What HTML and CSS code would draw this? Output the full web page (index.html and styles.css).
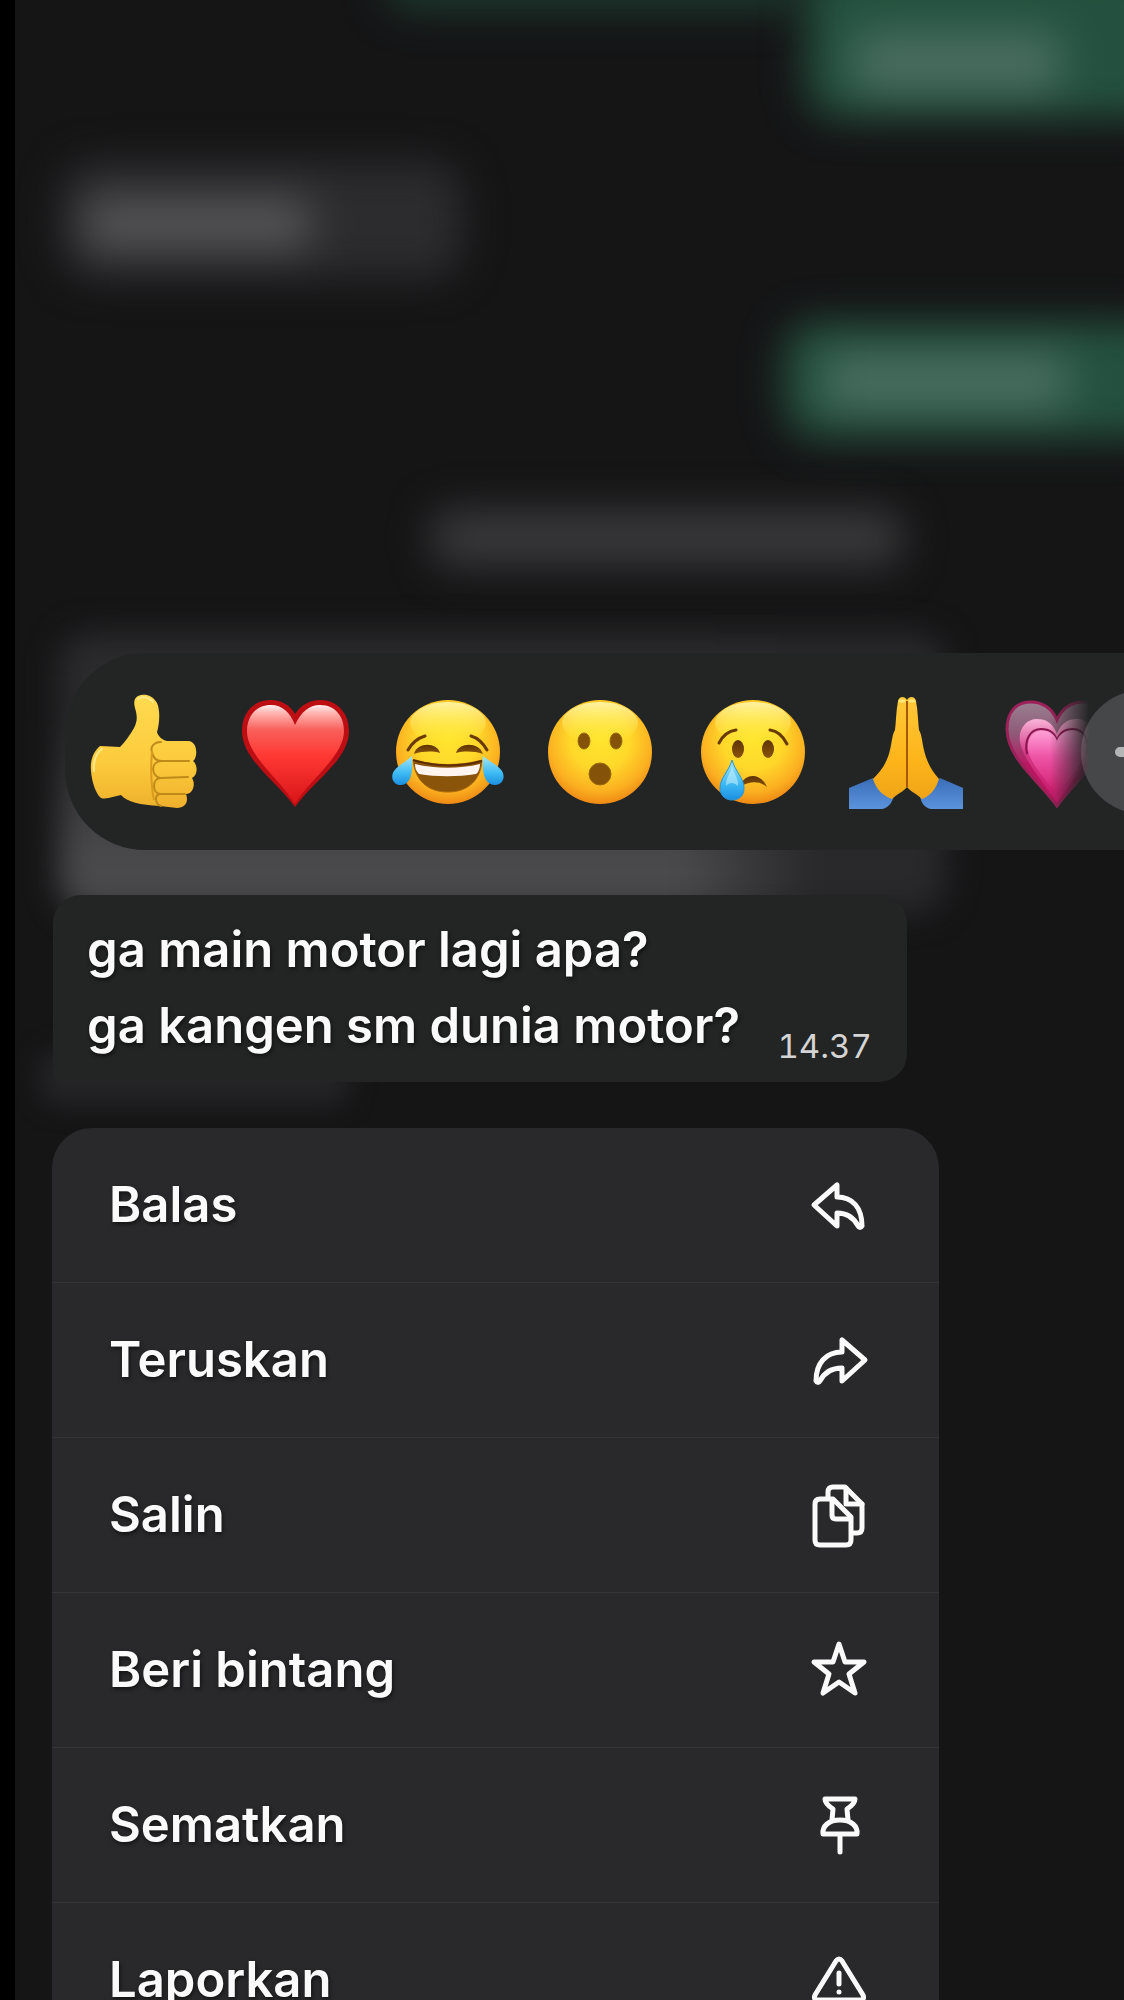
FILE: index.html
```html
<!DOCTYPE html>
<html lang="id">
<head>
  <meta charset="UTF-8">
  <meta name="viewport" content="width=device-width, initial-scale=1">
  <title>Chat</title>
  <link rel="stylesheet" href="styles.css">
</head>
<body>

  <main class="chat">

    <!-- older messages, out of focus behind the menu -->
    <div class="history" aria-hidden="true">
      <div class="row row-top">
        <div class="ghost ghost-strip"></div>
        <div class="ghost ghost-out"><span></span></div>
      </div>
      <div class="row">
        <div class="ghost ghost-in"><span></span></div>
      </div>
      <div class="row row-end">
        <div class="ghost ghost-out ghost-wide"><span></span></div>
      </div>
      <div class="row row-date">
        <div class="ghost ghost-date"></div>
      </div>
    </div>

    <section class="selected">
      <div class="selected-shade" aria-hidden="true"></div>
      <div class="selected-tail" aria-hidden="true"></div>

      <div class="reactions">
        <button type="button" class="reaction" aria-label="Suka">
          <svg viewBox="0 0 120 120">
            <defs>
              <linearGradient id="skin" x1="0" y1="0" x2="0" y2="1">
                <stop offset="0" stop-color="#ffda50"/>
                <stop offset="0.6" stop-color="#fccb3c"/>
                <stop offset="1" stop-color="#eeb02c"/>
              </linearGradient>
            </defs>
            <path fill="url(#skin)" d="M16 54C9 60 6 69 7 79C8 91 12 102 17 106C23 108 30 104 37 103C43 110 56 113 76 114L93 116C101 116 105 110 102 102C109 102 112 92 108 86C114 83 114 73 109 69C114 66 114 49 104 49L83 49C78 48 74 44 73 40C76 30 76 17 73 11C69 4 63 2 57 3C51 4 49 9 51 16C53 23 54 28 50 36C46 43 41 50 36 55Z"/>
            <g fill="none" stroke="#c08a1a" stroke-width="2" stroke-linecap="round">
              <path d="M77 50C70 50 66 55 68 60C69 66 72 69 78 69L105 69"/>
              <path d="M78 69C66 69 67 84 76 86L104 85"/>
              <path d="M76 86C68 87 68 101 76 102L101 102"/>
              <path d="M76 102C70 103 71 112 77 114"/>
            </g>
            <path fill="none" stroke="#d99b1e" stroke-width="2" d="M68 59C67 72 67 94 70 108"/>
            <path fill="none" stroke="#ffe98a" stroke-width="2" stroke-linecap="round" d="M54 7C58 4 65 5 69 10M18 57C12 61 9 70 10 79"/>
          </svg>
        </button>

        <button type="button" class="reaction" aria-label="Hati">
          <svg viewBox="0 0 120 120">
            <defs>
              <linearGradient id="heartFill" x1="0" y1="0" x2="0" y2="1">
                <stop offset="0" stop-color="#fff0ee"/>
                <stop offset="0.08" stop-color="#ffb5b1"/>
                <stop offset="0.25" stop-color="#f9605c"/>
                <stop offset="0.5" stop-color="#ff3a35"/>
                <stop offset="1" stop-color="#d81418"/>
              </linearGradient>
            </defs>
            <path fill="#bd0e14" d="M59 22C54 13 45 8 35 8C17 8 6 21 6 39C6 68 41 89 59 115C77 89 113 68 113 39C113 21 101 8 84 8C74 8 65 13 59 22Z"/>
            <path fill="url(#heartFill)" d="M59 33C54 20 46 13 35 13C20 13 11 24 11 39C11 64 44 87 59 112C74 87 108 64 108 39C108 24 99 13 84 13C73 13 65 20 59 33Z"/>
          </svg>
        </button>

        <button type="button" class="reaction" aria-label="Tertawa">
          <svg viewBox="0 0 120 120">
            <defs>
              <radialGradient id="face" cx="0.5" cy="0.38" r="0.64">
                <stop offset="0" stop-color="#ffe52e"/>
                <stop offset="0.45" stop-color="#ffd82a"/>
                <stop offset="0.78" stop-color="#fbb021"/>
                <stop offset="1" stop-color="#ec8412"/>
              </radialGradient>
              <linearGradient id="shine" x1="0" y1="0" x2="0" y2="1">
                <stop offset="0" stop-color="#fff9b8" stop-opacity="0.85"/>
                <stop offset="1" stop-color="#fff23a" stop-opacity="0"/>
              </linearGradient>
              <linearGradient id="eye" x1="0" y1="0" x2="0" y2="1">
                <stop offset="0" stop-color="#5e3305"/>
                <stop offset="1" stop-color="#8a5509"/>
              </linearGradient>
              <linearGradient id="tear" x1="0" y1="0" x2="0" y2="1">
                <stop offset="0" stop-color="#a4e6f8"/>
                <stop offset="0.6" stop-color="#3cb9f3"/>
                <stop offset="1" stop-color="#1c8fe0"/>
              </linearGradient>
            </defs>
            <circle cx="60" cy="60" r="52" fill="url(#face)"/>
            <ellipse cx="60" cy="31" rx="38" ry="21" fill="url(#shine)"/>
            <g fill="none" stroke="#6a3a05" stroke-width="3" stroke-linecap="round">
              <path d="M20 58C24 51 30 46 37 44"/>
              <path d="M83 44C90 46 95 51 99 58"/>
            </g>
            <path fill="url(#eye)" d="M26 62C29 50 49 50 52 61C45 59 35 59 26 62ZM68 61C71 50 91 50 95 62C86 59 76 59 68 61Z"/>
            <path fill="#8a540b" stroke="#a8680b" d="M25 68C47 74 73 74 94 68C93 88 80 100 60 100C39 100 27 88 25 68Z"/>
            <path fill="#fff4f0" d="M27 72C48 77 71 77 92 72C92 77 90 81 88 82C70 85 48 85 31 82C28 79 27 76 27 72Z"/>
            <path fill="none" stroke="#5e2d05" stroke-width="2" d="M25 68C47 75 73 75 94 69"/>
            <path fill="url(#tear)" d="M24 64C25 77 24 93 13 93C5 93 2 85 6 79C10 73 18 70 24 64Z"/>
            <path fill="url(#tear)" d="M95 64C102 70 110 73 114 79C118 86 114 93 107 93C95 93 94 76 95 64Z"/>
          </svg>
        </button>

        <button type="button" class="reaction" aria-label="Terkejut">
          <svg viewBox="0 0 120 120">
            <circle cx="60" cy="60" r="52" fill="url(#face)"/>
            <ellipse cx="60" cy="31" rx="38" ry="21" fill="url(#shine)"/>
            <g fill="#845208" stroke="#9a6a0a" stroke-width="1">
              <ellipse cx="44" cy="49" rx="6" ry="8"/>
              <ellipse cx="76" cy="49" rx="6" ry="8"/>
              <circle cx="60" cy="82" r="11"/>
            </g>
          </svg>
        </button>

        <button type="button" class="reaction" aria-label="Sedih">
          <svg viewBox="0 0 120 120">
            <circle cx="61" cy="60" r="52" fill="url(#face)"/>
            <ellipse cx="61" cy="31" rx="38" ry="21" fill="url(#shine)"/>
            <g fill="none" stroke="#6a3a05" stroke-width="3" stroke-linecap="round">
              <path d="M27 51C31 43 37 39 44 38"/>
              <path d="M78 38C86 39 91 44 95 52"/>
            </g>
            <g fill="url(#eye)">
              <ellipse cx="46" cy="57" rx="6" ry="9"/>
              <ellipse cx="76" cy="57" rx="6" ry="9"/>
              <path d="M49 92C54 81 69 81 75 95C68 89 58 89 50 94Z"/>
            </g>
            <path fill="url(#tear)" stroke="#2a94d6" d="M40 68C43 79 52 86 52 96C52 104 47 108 40 108C33 108 28 103 28 96C28 86 37 79 40 68Z"/>
            <path fill="#d5f6fd" opacity="0.5" d="M40 74C42 82 47 87 46 94C42 90 37 90 34 94C33 87 39 81 40 74Z"/>
          </svg>
        </button>

        <button type="button" class="reaction" aria-label="Terima kasih">
          <svg viewBox="0 0 120 120">
            <defs>
              <linearGradient id="palm" x1="0" y1="0" x2="0" y2="1">
                <stop offset="0" stop-color="#ffc93a"/>
                <stop offset="0.6" stop-color="#fdb51b"/>
                <stop offset="1" stop-color="#f0a416"/>
              </linearGradient>
              <linearGradient id="sleeve" x1="0" y1="0" x2="0" y2="1">
                <stop offset="0" stop-color="#3a6db8"/>
                <stop offset="1" stop-color="#5b94dc"/>
              </linearGradient>
            </defs>
            <path fill="url(#sleeve)" d="M29 86L5 96L5 117L38 117C44 116 48 111 50 104ZM96 86L119 96L119 117L87 117C81 116 77 111 76 104Z"/>
            <path fill="url(#palm)" d="M63 8C61 4 55 4 54 9C52 20 52 30 51 38C48 43 48 50 46 58C43 71 37 79 29 87C32 97 39 104 48 107C53 102 59 100 63 95C67 100 73 102 78 107C86 104 92 97 95 87C88 79 83 71 80 58C78 50 78 43 75 38C74 30 74 20 72 9C71 4 65 4 63 8Z"/>
            <path fill="none" stroke="#a45a0a" stroke-width="2" d="M63 9L63 95"/>
            <path fill="none" stroke="#ffe77c" stroke-width="3" stroke-linecap="round" d="M56 9L60 9M66 9L70 9"/>
          </svg>
        </button>

        <button type="button" class="reaction reaction-fade" aria-label="Hati tumbuh">
          <svg viewBox="0 0 120 120">
            <defs>
              <linearGradient id="pink" x1="0" y1="0" x2="0" y2="1">
                <stop offset="0" stop-color="#ff9fd6"/>
                <stop offset="0.4" stop-color="#ee55a6"/>
                <stop offset="1" stop-color="#cf1a6c"/>
              </linearGradient>
              <linearGradient id="pinkMid" x1="0" y1="0" x2="0" y2="1">
                <stop offset="0" stop-color="#f9b4d8"/>
                <stop offset="0.4" stop-color="#d43a86"/>
                <stop offset="1" stop-color="#c8186b"/>
              </linearGradient>
              <linearGradient id="pinkOut" x1="0" y1="0" x2="0" y2="1">
                <stop offset="0" stop-color="#9a8090"/>
                <stop offset="0.3" stop-color="#8f5a78"/>
                <stop offset="0.6" stop-color="#b81862"/>
                <stop offset="1" stop-color="#c2145f"/>
              </linearGradient>
            </defs>
            <path fill="url(#pinkOut)" stroke="#9c2159" stroke-width="3" d="M61 28C56 16 46 10 35 10C20 10 11 20 11 37C11 66 43 89 61 114C79 89 111 66 111 37C111 20 102 10 87 10C76 10 66 16 61 28Z"/>
            <path fill="url(#pinkMid)" d="M61 42C57 31 50 27 41 27C30 27 22 37 24 50C28 70 48 90 61 110C74 90 94 70 98 50C100 37 92 27 81 27C72 27 65 31 61 42Z"/>
            <path fill="none" stroke="#8c1450" stroke-width="2" d="M31 62C28 48 34 37 45 37C53 37 59 41 61 49C63 41 69 37 77 37C88 37 94 48 91 62"/>
            <path fill="url(#pink)" d="M61 49C59 42 53 39 46 39C36 39 31 47 32 58C35 74 51 88 61 103C71 88 87 74 90 58C91 47 86 39 76 39C69 39 63 42 61 49Z"/>
          </svg>
        </button>

        <button type="button" class="more" aria-label="Reaksi lainnya">
          <svg viewBox="0 0 124 124">
            <path d="M39 62H85M62 39V85"/>
          </svg>
        </button>
      </div>

      <article class="message">
        <p>ga main motor lagi apa?<br>ga kangen sm dunia motor?</p>
        <time datetime="14:37">14.37</time>
      </article>
    </section>

    <menu class="actions">
      <li>
        <button type="button">Balas
          <svg viewBox="0 0 60 60"><path d="M6 31L29 11V23C45 23 54 34 54 52C53 54 51 54 50 52C46 44 40 39 29 39V52Z"/></svg>
        </button>
      </li>
      <li>
        <button type="button">Teruskan
          <svg viewBox="0 0 60 60"><path d="M57 31L34 11V23C18 23 8 34 8 52C9 54 11 54 12 52C16 44 23 39 34 39V52Z"/></svg>
        </button>
      </li>
      <li>
        <button type="button">Salin
          <svg viewBox="0 0 60 60">
            <path d="M20 14V8Q20 3 25 3H37L54 20V44Q54 49 49 49H44"/>
            <path d="M38 4V20H54"/>
            <path d="M12 15H25L43 33V56Q43 61 38 61H12Q7 61 7 56V20Q7 15 12 15Z"/>
            <path d="M24 16V31Q24 35 28 35H42"/>
          </svg>
        </button>
      </li>
      <li>
        <button type="button">Beri bintang
          <svg viewBox="0 0 60 60"><path d="M31 5L37 23L56 23L41 35L47 54L31 43L15 54L21 35L6 23L25 23Z"/></svg>
        </button>
      </li>
      <li>
        <button type="button">Sematkan
          <svg viewBox="0 0 60 60">
            <path d="M17 5H47C47 9 42 13 39 15L40 26M17 5C17 9 22 13 25 15L24 26"/>
            <path d="M15 40C14 32 21 26 32 26C43 26 50 32 49 40Z"/>
            <path d="M32 41V58"/>
          </svg>
        </button>
      </li>
      <li>
        <button type="button">Laporkan
          <svg viewBox="0 0 60 60">
            <path d="M28 12Q31 8 34 12L55 46Q57 51 52 51H10Q5 51 7 46Z"/>
            <path d="M31 24V35M31 43V43"/>
          </svg>
        </button>
      </li>
    </menu>

  </main>

</body>
</html>
```

FILE: styles.css
```css
* {
  box-sizing: border-box;
}
body {
  margin: 0;
  background: #000;
  color: #fafafa;
  font-family: Inter, "Liberation Sans", sans-serif;
}
button {
  margin: 0;
  padding: 0;
  border: none;
  background: none;
  color: inherit;
  font: inherit;
  cursor: pointer;
}
svg {
  display: block;
}
.chat {
  height: 100vh;
  margin-left: 15px;
  overflow: hidden;
  background: #151516;
}

/* blurred history */
.history {
  display: flex;
  flex-direction: column;
  gap: 44px;
  height: 653px;
}
.row {
  display: flex;
}
.row-top {
  justify-content: flex-end;
  align-items: flex-start;
  margin-top: -40px;
}
.row-end {
  justify-content: flex-end;
}
.row-date {
  justify-content: flex-end;
  margin-top: 28px;
  padding-right: 20%;
}
.ghost {
  border-radius: 32px;
  filter: blur(20px);
}
.ghost-strip {
  width: 38%;
  height: 50px;
  background: #1d3a2f;
}
.ghost-out {
  width: 33%;
  height: 158px;
  margin-right: -48px;
  padding: 72px 112px 24px 48px;
  background: #24513f;
}
.ghost-wide {
  width: 35%;
  height: 116px;
  padding: 32px 104px 28px 40px;
}
.ghost-out span {
  display: block;
  height: 100%;
  background: #4a6e60;
  filter: blur(8px);
}
.ghost-in {
  width: 36%;
  height: 116px;
  margin-left: 48px;
  padding: 36px 152px 28px 20px;
  background: #2c2c2e;
}
.ghost-in span {
  display: block;
  height: 100%;
  background: #555557;
  filter: blur(8px);
}
.ghost-date {
  width: 53%;
  height: 56px;
  border-radius: 16px;
  background: #39393b;
}

/* reaction bar and message */
.selected {
  position: relative;
}
.selected-shade {
  position: absolute;
  top: -20px;
  left: 44px;
  width: 80%;
  height: 280px;
  border-radius: 32px;
  background:
    linear-gradient(to right, transparent 70%, #29292b 85%),
    linear-gradient(to bottom, #2b2b2d 30%, #4a4a4c 80%);
  filter: blur(16px);
}
.selected-tail {
  position: absolute;
  bottom: -24px;
  left: 24px;
  width: 28%;
  height: 56px;
  border-radius: 20px;
  background: #242426;
  filter: blur(12px);
}
.reactions {
  position: relative;
  display: flex;
  align-items: center;
  gap: 32px;
  height: 197px;
  margin-left: 50px;
  padding-left: 19px;
  border-radius: 80px 0 0 80px;
  background: #232525;
}
.reaction {
  flex: none;
  width: 120px;
  height: 120px;
}
.reaction-fade {
  -webkit-mask-image: linear-gradient(to right, #000 45%, transparent 78%);
  mask-image: linear-gradient(to right, #000 45%, transparent 78%);
}
.more {
  flex: none;
  width: 124px;
  height: 124px;
  margin-left: -67px;
  border-radius: 50%;
  background: #454748;
}
.more path {
  fill: none;
  stroke: #b4b5b5;
  stroke-width: 10;
  stroke-linecap: round;
}
.message {
  position: relative;
  display: flex;
  justify-content: space-between;
  align-items: flex-end;
  width: 77%;
  margin: 45px 0 0 38px;
  padding: 17px 35px 18px 34px;
  border-radius: 28px 28px 28px 8px;
  background: #232424;
}
.message p {
  margin: 0;
  font-size: 49px;
  font-weight: 600;
  line-height: 76px;
  text-shadow: 1px 2px 4px rgba(0, 0, 0, 0.6);
}
.message time {
  color: #d4d4d4;
  font-size: 33px;
  font-variant-numeric: tabular-nums;
  line-height: 36px;
}

/* context menu */
.actions {
  position: relative;
  width: 80%;
  margin: 46px 0 0 37px;
  padding: 0;
  border-radius: 40px;
  background: #29292b;
  list-style: none;
}
.actions li + li {
  border-top: 1px solid #343436;
}
.actions button {
  display: flex;
  justify-content: space-between;
  align-items: center;
  width: 100%;
  height: 154px;
  padding: 0 71px 2px 57px;
  font-size: 49px;
  font-weight: 600;
  text-align: left;
  text-shadow: 1px 2px 4px rgba(0, 0, 0, 0.6);
}
.actions svg {
  width: 60px;
  height: 60px;
  overflow: visible;
  fill: none;
  stroke: #fafafa;
  stroke-width: 5;
  stroke-linecap: round;
  stroke-linejoin: round;
}
```
